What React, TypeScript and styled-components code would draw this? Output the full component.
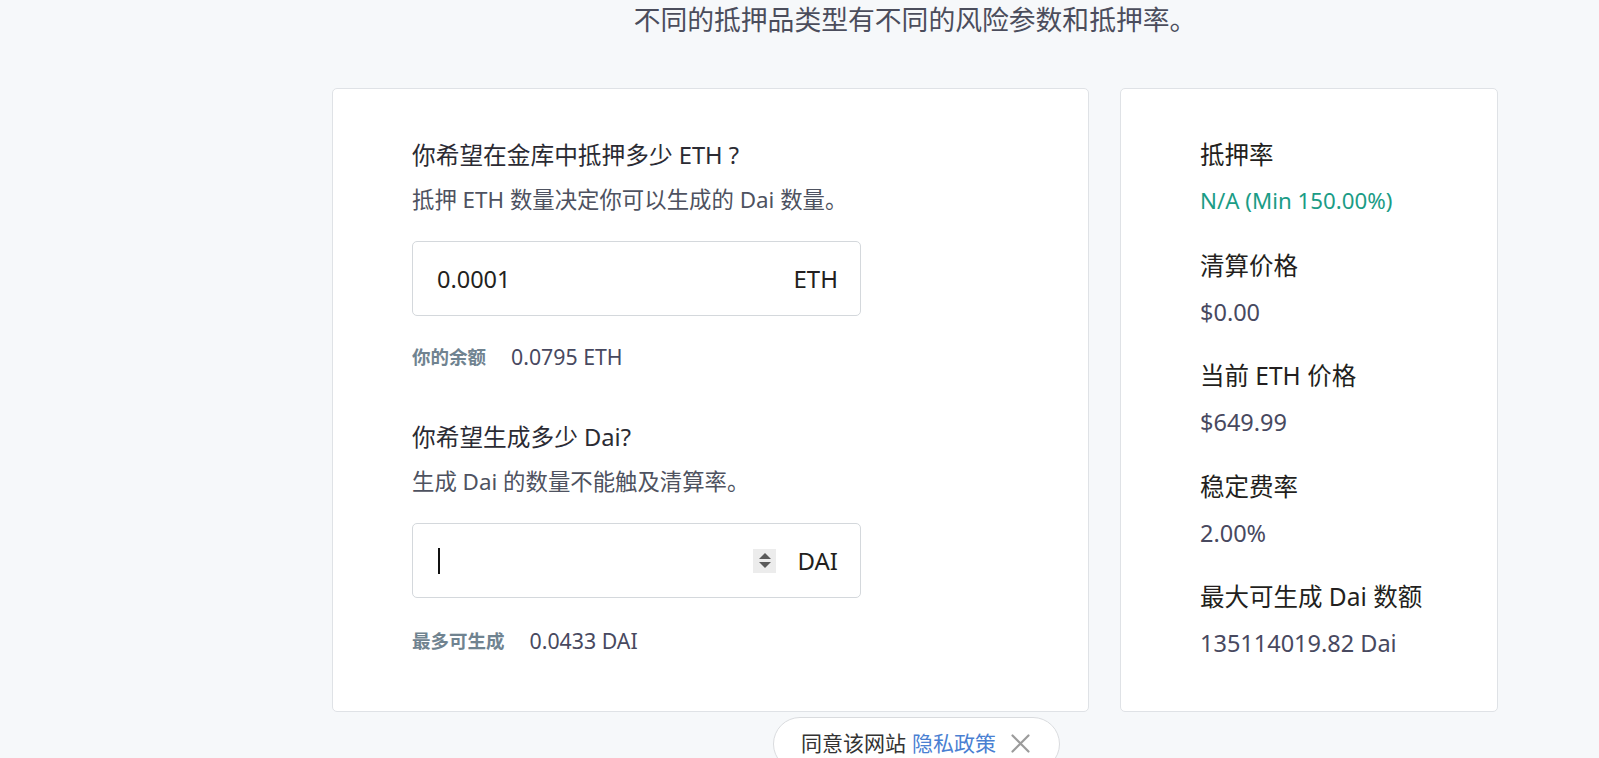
import React from "react";
import styled, { createGlobalStyle } from "styled-components";

const GlobalStyle = createGlobalStyle`
  html, body {
    margin: 0;
    padding: 0;
    background: #f6f8fa;
    font-family: "Noto Sans", "Noto Sans CJK SC", sans-serif;
    overflow: hidden;
  }
  * {
    box-sizing: border-box;
  }
`;

const Page = styled.div`
  width: 1166px;
  margin-left: 332px;
  height: 758px;
`;

const Title = styled.h2`
  margin: 0 0 48px;
  height: 40px;
  line-height: 40px;
  text-align: center;
  font-size: 26.8px;
  font-weight: 400;
  color: #4b4d5c;
  white-space: nowrap;
`;

const Columns = styled.div`
  display: grid;
  grid-template-columns: 757px 378px;
  gap: 31px;
`;

const Card = styled.div`
  background: #fff;
  border: 1px solid #dfe2e6;
  border-radius: 5px;
  padding: 50px 80px 58px 79px;
`;

const Heading = styled.div`
  font-size: 23.7px;
  line-height: 32px;
  color: #2b2b33;
  white-space: nowrap;
`;

const Sub = styled.div`
  margin-top: 14px;
  font-size: 22.4px;
  line-height: 30px;
  color: #4e5260;
  white-space: nowrap;
`;

const Field = styled.div`
  margin-top: 26px;
  width: 449px;
  height: 75px;
  border: 1px solid #d4d8dc;
  border-radius: 5px;
  display: flex;
  align-items: center;
  padding: 0 22px 0 24px;
  background: #fff;
`;

const Input = styled.input`
  flex: 1;
  min-width: 0;
  border: none;
  outline: none;
  background: transparent;
  font-family: inherit;
  font-size: 23.5px;
  color: #231f20;
  padding: 0;
`;

const Caret = styled.span`
  width: 1.5px;
  height: 26px;
  background: #111;
  margin-left: 1px;
`;

const Spinner = styled.div`
  width: 23px;
  height: 24px;
  background: #ececec;
  display: flex;
  flex-direction: column;
  align-items: center;
  justify-content: center;
  gap: 3px;
  margin-right: 21px;
`;

const Tri = styled.span<{ $down?: boolean }>`
  width: 0;
  height: 0;
  border-left: 6px solid transparent;
  border-right: 6px solid transparent;
  ${(p) =>
    p.$down
      ? "border-top: 6px solid #5a5a5a;"
      : "border-bottom: 6px solid #5a5a5a;"}
`;

const Unit = styled.span`
  font-size: 24px;
  color: #231f20;
`;

const Hint = styled.div<{ $gap?: number }>`
  margin-top: ${(p) => p.$gap ?? 27}px;
  display: flex;
  align-items: center;
  gap: 25px;
  height: 26px;
`;

const HintLabel = styled.span`
  font-size: 18.5px;
  font-weight: 700;
  color: #708390;
`;

const HintValue = styled.span`
  font-size: 21.3px;
  color: #48495f;
`;

const Section = styled.div`
  margin-top: 52px;
`;

const StatCard = styled(Card)`
  padding: 50px 30px 40px 79px;
`;

const Stat = styled.div`
  & + & {
    margin-top: 32.5px;
  }
`;

const StatLabel = styled.div`
  font-size: 24.5px;
  line-height: 32px;
  color: #231f20;
  white-space: nowrap;
`;

const StatValue = styled.div<{ $accent?: boolean }>`
  margin-top: 14px;
  font-size: ${(p) => (p.$accent ? 22.3 : 23.5)}px;
  line-height: 32px;
  color: ${(p) => (p.$accent ? "#1b9c86" : "#48495f")};
  white-space: nowrap;
`;

const Consent = styled.div`
  position: fixed;
  left: 773px;
  top: 717px;
  width: 287px;
  height: 54px;
  background: #fff;
  border: 1px solid #d9dbde;
  border-radius: 27px;
  display: flex;
  align-items: flex-start;
  padding: 10px 0 0 27px;
  font-size: 21px;
  line-height: 30px;
  color: #333;
`;

const ConsentLink = styled.a`
  color: #4a80d2;
  text-decoration: none;
  margin-left: 6px;
`;

const CloseBtn = styled.button`
  border: none;
  background: none;
  padding: 0;
  margin: 6px 0 0 15px;
  cursor: pointer;
  display: flex;
`;

const stats = [
  { label: "抵押率", value: "N/A (Min 150.00%)", accent: true },
  { label: "清算价格", value: "$0.00" },
  { label: "当前 ETH 价格", value: "$649.99" },
  { label: "稳定费率", value: "2.00%" },
  { label: "最大可生成 Dai 数额", value: "135114019.82 Dai" },
];

export default function App() {
  return (
    <>
      <GlobalStyle />
      <Page>
        <Title>不同的抵押品类型有不同的风险参数和抵押率。</Title>
        <Columns>
          <Card>
            <Heading>你希望在金库中抵押多少 ETH ?</Heading>
            <Sub>抵押 ETH 数量决定你可以生成的 Dai 数量。</Sub>
            <Field>
              <Input defaultValue="0.0001" />
              <Unit>ETH</Unit>
            </Field>
            <Hint>
              <HintLabel>你的余额</HintLabel>
              <HintValue>0.0795 ETH</HintValue>
            </Hint>
            <Section>
              <Heading>你希望生成多少 Dai?</Heading>
              <Sub>生成 Dai 的数量不能触及清算率。</Sub>
              <Field>
                <Caret />
                <Input defaultValue="" />
                <Spinner>
                  <Tri />
                  <Tri $down />
                </Spinner>
                <Unit>DAI</Unit>
              </Field>
              <Hint $gap={29}>
                <HintLabel>最多可生成</HintLabel>
                <HintValue>0.0433 DAI</HintValue>
              </Hint>
            </Section>
          </Card>
          <StatCard>
            {stats.map((s) => (
              <Stat key={s.label}>
                <StatLabel>{s.label}</StatLabel>
                <StatValue $accent={s.accent}>{s.value}</StatValue>
              </Stat>
            ))}
          </StatCard>
        </Columns>
      </Page>
      <Consent>
        同意该网站
        <ConsentLink href="#">隐私政策</ConsentLink>
        <CloseBtn aria-label="close">
          <svg width="19" height="19" viewBox="0 0 19 19">
            <path d="M1.5 1.5 L17.5 17.5 M17.5 1.5 L1.5 17.5" stroke="#9b9b9b" strokeWidth="2.2" strokeLinecap="round" />
          </svg>
        </CloseBtn>
      </Consent>
    </>
  );
}
